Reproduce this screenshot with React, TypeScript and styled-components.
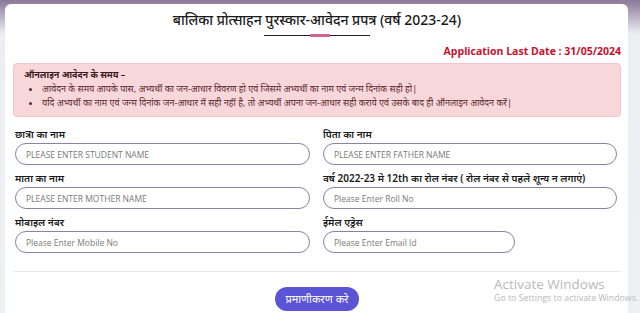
import styled, { createGlobalStyle } from "styled-components";

const GlobalStyle = createGlobalStyle`
  html, body {
    margin: 0;
    padding: 0;
  }
  body {
    width: 640px;
    height: 313px;
    overflow: hidden;
    font-family: "Noto Sans", "Open Sans", sans-serif;
    background: linear-gradient(180deg, #8b7b99 0px, #9a8ba8 6px, #eceef3 34px, #eef0f4 100%);
  }
`;

const fields = [
  { label: "छात्रा का नाम", placeholder: "PLEASE ENTER STUDENT NAME", short: false },
  { label: "पिता का नाम", placeholder: "PLEASE ENTER FATHER NAME", short: false },
  { label: "माता का नाम", placeholder: "PLEASE ENTER MOTHER NAME", short: false },
  {
    label: "वर्ष 2022-23 मे 12th का रोल नंबर ( रोल नंबर से पहले शून्य न लगाएं)",
    placeholder: "Please Enter Roll No",
    short: false,
  },
  { label: "मोबाइल नंबर", placeholder: "Please Enter Mobile No", short: false },
  { label: "ईमेल एड्रेस", placeholder: "Please Enter Email Id", short: true },
];

export default function App() {
  return (
    <>
      <GlobalStyle />
      <StPage>
        <StCard>
          <StHeader>
            <StTitle>बालिका प्रोत्साहन पुरस्कार-आवेदन प्रपत्र (वर्ष 2023-24)</StTitle>
            <StUnderline>
              <span />
            </StUnderline>
          </StHeader>
          <StLastDate>Application Last Date : 31/05/2024</StLastDate>

          <StNotice>
            <StNoticeHead>ऑनलाइन आवेदन के समय –</StNoticeHead>
            <StNoticeList>
              <li>आवेदन के समय आपके पास, अभ्यर्थी का जन-आधार विवरण हो एवं जिसमे अभ्यर्थी का नाम एवं जन्म दिनांक सही हो|</li>
              <li>
                यदि अभ्यर्थी का नाम एवं जन्म दिनांक जन-आधार में सही नहीं है, तो अभ्यर्थी अपना जन-आधार सही कराये एवं उसके बाद ही
                ऑनलाइन आवेदन करें|
              </li>
            </StNoticeList>
          </StNotice>

          <StForm>
            {fields.map((f) => (
              <StField key={f.label}>
                <StLabel>{f.label}</StLabel>
                <StInput placeholder={f.placeholder} short={f.short} />
              </StField>
            ))}
          </StForm>

          <StDivider />

          <StActions>
            <StSubmit>प्रमाणीकरण करे</StSubmit>
          </StActions>
        </StCard>

        <StWatermark>
          <div>Activate Windows</div>
          <small>Go to Settings to activate Windows.</small>
        </StWatermark>
      </StPage>
    </>
  );
}

const StPage = styled.div`
  position: relative;
  height: 313px;
  padding: 4px 12px 0 5px;
  box-sizing: border-box;
`;

const StCard = styled.div`
  background: #fff;
  border-radius: 6px 6px 0 0;
  height: 100%;
  padding: 6px 7px 0 8px;
  box-sizing: border-box;
`;

const StHeader = styled.div`
  display: flex;
  flex-direction: column;
  align-items: center;
`;

const StTitle = styled.h1`
  margin: 0;
  font-size: 14px;
  font-weight: 500;
  line-height: 20px;
  color: #1a1a1a;
`;

const StUnderline = styled.div`
  position: relative;
  width: 106px;
  height: 1px;
  margin-top: 5px;
  background: #222;

  span {
    position: absolute;
    left: 46px;
    top: -1px;
    width: 20px;
    height: 3px;
    background: #d0668f;
  }
`;

const StLastDate = styled.div`
  margin-top: 7px;
  text-align: right;
  font-family: "Open Sans", "Noto Sans", sans-serif;
  font-size: 10.5px;
  font-weight: 700;
  line-height: 16px;
  color: #c8102e;
`;

const StNotice = styled.div`
  margin-top: 4px;
  padding: 4px 10px 6px;
  background: #f8d7da;
  border: 1px solid #f3c4c9;
  border-radius: 4px;
  color: #5a2a2e;
  font-size: 9px;
  line-height: 14px;
`;

const StNoticeHead = styled.div`
  font-weight: 700;
  color: #3a1a1c;
`;

const StNoticeList = styled.ul`
  margin: 0;
  padding-left: 18px;

  li {
    margin: 0;
  }
`;

const StForm = styled.div`
  display: grid;
  grid-template-columns: 295px 294px;
  column-gap: 13px;
  row-gap: 6px;
  padding: 10px 4px 0 2px;
`;

const StField = styled.div`
  display: flex;
  flex-direction: column;
  gap: 2px;
`;

const StLabel = styled.label`
  font-size: 10px;
  font-weight: 600;
  line-height: 14px;
  color: #1a1a1a;
`;

const StInput = styled.input<{ short: boolean }>`
  width: ${(p) => (p.short ? "192px" : "100%")};
  height: 22px;
  box-sizing: border-box;
  padding: 0 10px;
  border: 1.5px solid #8b80a6;
  border-radius: 11px;
  font-family: "Open Sans", "Noto Sans", sans-serif;
  font-size: 8.5px;
  outline: none;

  &::placeholder {
    color: #7a7a7a;
  }
`;

const StDivider = styled.hr`
  margin: 18px 0 0;
  border: 0;
  border-top: 1.5px solid #e8e8e8;
`;

const StActions = styled.div`
  display: flex;
  justify-content: center;
  padding-top: 15px;
`;

const StSubmit = styled.button`
  height: 24px;
  padding: 0 10px;
  border: 0;
  border-radius: 12px;
  background: #5b55d6;
  color: #fff;
  font-family: "Noto Sans", sans-serif;
  font-size: 11px;
  line-height: 24px;
`;

const StWatermark = styled.div`
  position: absolute;
  left: 494px;
  top: 276px;
  color: #b9b9b9;
  font-family: "Open Sans", sans-serif;
  line-height: 1.2;

  div {
    font-size: 13.5px;
  }
  small {
    display: block;
    margin-top: 1px;
    font-size: 8.8px;
  }
`;
